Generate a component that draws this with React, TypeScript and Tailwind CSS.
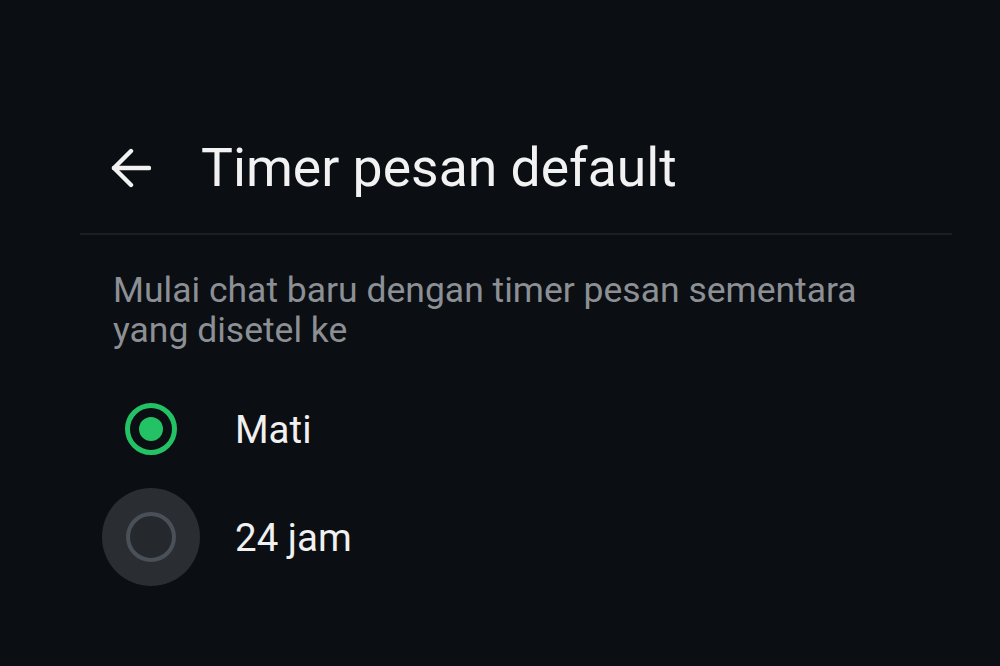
import React from "react";

function BackArrow() {
  return (
    <svg width="40" height="40" viewBox="0 0 40 40" fill="none" stroke="#f2f2f2" strokeWidth="4.4" strokeLinecap="round" strokeLinejoin="round">
      <path d="M38 20H3" />
      <path d="M20 3L3 20l17 17" />
    </svg>
  );
}

function Radio({ checked, pressed }: { checked: boolean; pressed?: boolean }) {
  return (
    <div
      className={`flex h-[98px] w-[98px] items-center justify-center rounded-full ${
        pressed ? "bg-[#2a2d32]" : ""
      }`}
    >
      {checked ? (
        <div className="flex h-[52px] w-[52px] items-center justify-center rounded-full border-[5px] border-[#23c265]">
          <div className="h-[24px] w-[24px] rounded-full bg-[#23c265]" />
        </div>
      ) : (
        <div className="h-[50px] w-[50px] rounded-full border-[4px] border-[#4a5058] bg-[#25282d]" />
      )}
    </div>
  );
}

const options = [
  { label: "Mati", checked: true, pressed: false },
  { label: "24 jam", checked: false, pressed: true },
];

export default function App() {
  return (
    <div
      className="flex h-[666px] w-full flex-col bg-[#0b0e12] text-[#f2f2f2]"
      style={{ fontFamily: "Roboto, 'Noto Sans', sans-serif" }}
    >
      <header className="mt-[130px] flex h-[76px] items-center pl-[111px]">
        <BackArrow />
        <h1 className="ml-[50px] text-[53.5px] font-normal leading-none">Timer pesan default</h1>
      </header>

      <div className="ml-[80px] mr-[48px] mt-[27px] h-[2px] bg-[#1b1e23]" />

      <p className="mt-[35px] pl-[113px] pr-[120px] text-[35.5px] leading-[40px] text-[#8c9095]">
        Mulai chat baru dengan timer pesan sementara
        <br />
        yang disetel ke
      </p>

      <ul className="mt-[25px] flex flex-col">
        {options.map((o) => (
          <li key={o.label} className="flex h-[108px] items-center pl-[102px]">
            <Radio checked={o.checked} pressed={o.pressed} />
            <span className="ml-[35px] mt-[2px] text-[38.5px] leading-none text-[#f0f0f0]">{o.label}</span>
          </li>
        ))}
      </ul>
    </div>
  );
}
